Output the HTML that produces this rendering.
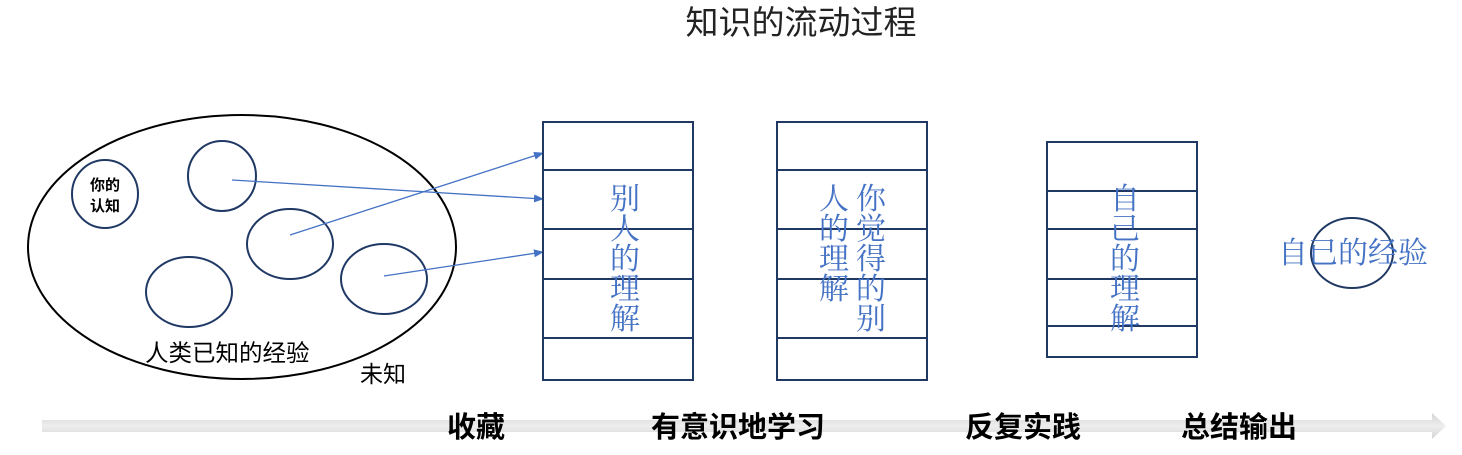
<!DOCTYPE html>
<html><head><meta charset="utf-8"><style>
html,body{margin:0;padding:0;background:#fff;}
svg{display:block;font-family:"Liberation Sans","Noto Sans CJK SC",sans-serif;}
</style></head><body>
<svg width="1462" height="455" viewBox="0 0 1462 455">
<defs>
<marker id="a" markerWidth="10" markerHeight="8" refX="9" refY="4" orient="auto" markerUnits="userSpaceOnUse"><path d="M0,0 L10,4 L0,8 z" fill="#4472c4"/></marker>
<linearGradient id="g" x1="0" y1="0" x2="0" y2="1"><stop offset="0" stop-color="#d4d4d4"/><stop offset="0.5" stop-color="#eeeeee"/><stop offset="1" stop-color="#d4d4d4"/></linearGradient>
</defs>
<text x="801" y="34" font-size="33" text-anchor="middle" fill="#222">知识的流动过程</text>
<ellipse cx="242" cy="247" rx="214" ry="132" fill="none" stroke="#000" stroke-width="2"/>
<g fill="none" stroke="#1f3864" stroke-width="2">
<ellipse cx="105" cy="194" rx="33" ry="34"/>
<ellipse cx="222" cy="176" rx="34" ry="35"/>
<ellipse cx="290" cy="244" rx="43" ry="35"/>
<ellipse cx="189" cy="292" rx="43" ry="35"/>
<ellipse cx="384" cy="279" rx="43" ry="35"/>
<ellipse cx="1352" cy="253" rx="41" ry="35"/>
</g>
<text x="105" y="190" font-size="15" font-weight="bold" text-anchor="middle" fill="#000">你的</text>
<text x="105" y="211" font-size="15" font-weight="bold" text-anchor="middle" fill="#000">认知</text>
<text x="145" y="361" font-size="23.5" fill="#000">人类已知的经验</text>
<text x="360" y="382" font-size="23" fill="#000">未知</text>
<g stroke="#4472c4" stroke-width="1.3" marker-end="url(#a)">
<line x1="290" y1="235" x2="543" y2="153"/>
<line x1="232" y1="180" x2="543" y2="199"/>
<line x1="384" y1="276" x2="543" y2="252"/>
</g>
<g fill="none" stroke="#1f3864" stroke-width="2">
<rect x="543" y="122" width="150" height="258"/>
<line x1="543" y1="170" x2="693" y2="170"/><line x1="543" y1="229" x2="693" y2="229"/><line x1="543" y1="279" x2="693" y2="279"/><line x1="543" y1="338" x2="693" y2="338"/>
<rect x="777" y="122" width="150" height="258"/>
<line x1="777" y1="170" x2="927" y2="170"/><line x1="777" y1="229" x2="927" y2="229"/><line x1="777" y1="279" x2="927" y2="279"/><line x1="777" y1="338" x2="927" y2="338"/>
<rect x="1047" y="142" width="150" height="215"/>
<line x1="1047" y1="191" x2="1197" y2="191"/><line x1="1047" y1="229" x2="1197" y2="229"/><line x1="1047" y1="279" x2="1197" y2="279"/><line x1="1047" y1="326" x2="1197" y2="326"/>
</g>
<g fill="#4472c4" font-size="30" text-anchor="middle" font-family="'Liberation Serif','Noto Serif CJK SC',serif">
<text x="625" y="209">别</text><text x="625" y="239">人</text><text x="625" y="269">的</text><text x="625" y="299">理</text><text x="625" y="329">解</text>
<text x="834" y="209">人</text><text x="834" y="239">的</text><text x="834" y="269">理</text><text x="834" y="299">解</text>
<text x="871" y="209">你</text><text x="871" y="239">觉</text><text x="871" y="269">得</text><text x="871" y="299">的</text><text x="871" y="329">别</text>
<text x="1125" y="209">自</text><text x="1125" y="239">己</text><text x="1125" y="269">的</text><text x="1125" y="299">理</text><text x="1125" y="329">解</text>
<text x="1353" y="263">自已的经验</text>
</g>
<path d="M42,420 L1432,420 L1432,413 L1446,426 L1432,439 L1432,432 L42,432 z" fill="url(#g)"/>
<g font-size="29" font-weight="bold" fill="#000">
<text x="447" y="437">收藏</text>
<text x="651" y="437">有意识地学习</text>
<text x="965" y="437">反复实践</text>
<text x="1181" y="437">总结输出</text>
</g>
</svg>
</body></html>
